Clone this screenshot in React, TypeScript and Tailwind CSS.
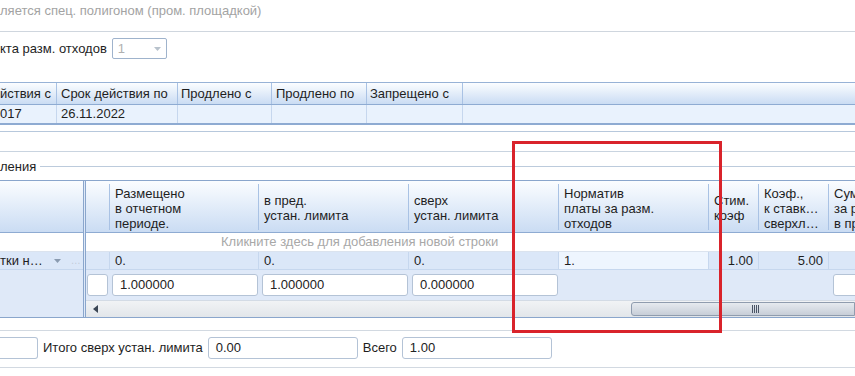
import { ReactNode } from "react";

type Col = { w: number; lines: string[] };

const gridCols: Col[] = [
  { w: 24, lines: [] },
  { w: 149, lines: ["Размещено", "в отчетном", "периоде."] },
  { w: 150, lines: ["в пред.", "устан. лимита"] },
  { w: 150, lines: ["сверх", "устан. лимита"] },
  { w: 150, lines: ["Норматив", "платы за разм.", "отходов"] },
  { w: 50, lines: ["Стим.", "коэф"] },
  { w: 70, lines: ["Коэф.,", "к ставк…", "сверхл…"] },
  { w: 60, lines: ["Сум…", "за р…", "в пр…"] },
];

function Input({ value, className }: { value: string; className: string }) {
  return (
    <div className={`h-[22px] border border-[#b4c3d6] rounded-[3px] bg-white flex items-center pl-[7px] text-[#222] ${className}`}>
      {value}
    </div>
  );
}

function HeadCell({ w, children, last }: { w: number; children: ReactNode; last?: boolean }) {
  return (
    <div className="h-full flex items-center shrink-0" style={{ width: w }}>
      <div className="flex-1 h-full flex items-center pl-[5px] pt-[3px] leading-[15px] text-[#1e1e1e] overflow-hidden whitespace-nowrap">
        {children}
      </div>
      {!last && <div className="w-px h-[46px] bg-[#a9c2e4]" />}
    </div>
  );
}

export default function App() {
  return (
    <div className="w-[855px] h-[376px] overflow-hidden bg-white relative font-['Liberation_Sans',Arial,sans-serif] text-[13px] text-[#1e1e1e]">
      {/* Top caption */}
      <div className="h-[31px] flex items-center pb-[9px] text-[#a3a3a3] whitespace-nowrap">
        ляется спец. полигоном (пром. площадкой)
      </div>
      <div className="h-px bg-[#cfd6de]" />

      {/* Combobox row */}
      <div className="h-[50px] pt-[6px] flex items-start">
        <span className="h-[20px] flex items-center mt-[1px]">кта разм. отходов</span>
        <div className="ml-[5px] w-[55px] h-[21px] border border-[#9fb3cc] rounded-[2px] flex items-center justify-between pl-[5px] pr-[5px] text-[#b0b0b0]">
          <span>1</span>
          <svg width="7" height="4" viewBox="0 0 7 4">
            <path d="M0 0h7L3.5 4z" fill="#b8c2cc" />
          </svg>
        </div>
      </div>

      {/* Period table */}
      <div className="border-t border-[#97b2d6]">
        <div className="h-[22px] flex bg-linear-to-b from-[#fbfdff] to-[#cadcf3] border-b border-[#8eabd2]">
          <div className="w-[57px] flex items-center justify-end pr-[5px] border-r border-[#a9c2e4] whitespace-nowrap">йствия с</div>
          <div className="w-[121px] flex items-center pl-[4px] border-r border-[#a9c2e4]">Срок действия по</div>
          <div className="w-[94px] flex items-center pl-[3px] border-r border-[#a9c2e4]">Продлено с</div>
          <div className="w-[95px] flex items-center pl-[4px] border-r border-[#a9c2e4]">Продлено по</div>
          <div className="w-[96px] flex items-center pl-[3px] border-r border-[#a9c2e4]">Запрещено с</div>
          <div className="flex-1" />
        </div>
        <div className="h-[20px] flex bg-[#e9f2fd] border-b-2 border-[#8eabd2]">
          <div className="w-[57px] flex items-center border-r border-[#c6d7ee]">017</div>
          <div className="w-[121px] flex items-center pl-[4px] border-r border-[#c6d7ee]">26.11.2022</div>
          <div className="w-[94px] border-r border-[#c6d7ee]" />
          <div className="w-[95px] border-r border-[#c6d7ee]" />
          <div className="w-[96px] border-r border-[#c6d7ee]" />
          <div className="flex-1" />
        </div>
      </div>

      <div className="h-[6px]" />
      <div className="h-px bg-[#b7c8dc]" />
      <div className="h-[19px]" />
      <div className="h-px bg-[#c9d4e0]" />

      {/* Fieldset legend */}
      <div className="h-[28px] flex items-center pt-[1px]">
        <span>ления</span>
        <div className="ml-[4px] flex-1 h-px bg-[#bccbdc]" />
      </div>

      {/* Grid */}
      <div className="flex h-[138px] border-t border-b border-[#8aa6cc]">
        <div className="w-[83px] shrink-0 flex flex-col">
          <div className="h-[52px] bg-linear-to-b from-[#fbfdff] to-[#cadcf3] border-b border-[#8eabd2]" />
          <div className="h-[19px] bg-white border-b border-[#dbe3ee]" />
          <div className="h-[18px] bg-[#dbe7f8] flex items-center whitespace-nowrap border-b border-[#c6d7ee]">
            <span>тки н…</span>
            <svg className="ml-[11px]" width="7" height="4" viewBox="0 0 7 4">
              <path d="M0 0h7L3.5 4z" fill="#8a9bb0" />
            </svg>
            <span className="ml-[10px] text-[#c2ccd8] text-[10px]">…</span>
          </div>
          <div className="flex-1 bg-[#dfe9f8]" />
        </div>
        <div className="w-[3px] shrink-0 border-l border-r border-[#8aa6cc] bg-[#dfe9f8]" />
        <div className="flex-1 flex flex-col overflow-hidden">
          <div className="h-[52px] shrink-0 flex bg-linear-to-b from-[#fbfdff] to-[#cadcf3] border-b border-[#8eabd2]">
            {gridCols.map((c, i) => (
              <HeadCell key={i} w={c.w} last={i === gridCols.length - 1}>
                <div className="flex flex-col">
                  {c.lines.map((l) => (
                    <span key={l}>{l}</span>
                  ))}
                </div>
              </HeadCell>
            ))}
          </div>
          <div className="h-[19px] shrink-0 flex items-center pl-[135px] text-[#a8a8a8] bg-white border-b border-[#dbe3ee] whitespace-nowrap">
            Кликните здесь для добавления новой строки
          </div>
          <div className="h-[18px] shrink-0 flex bg-[#dbe7f8] border-b border-[#c6d7ee]">
            <div className="w-[24px] shrink-0 border-r border-[#c6d7ee]" />
            <div className="w-[149px] shrink-0 pl-[5px] flex items-center border-r border-[#c6d7ee]">0.</div>
            <div className="w-[150px] shrink-0 pl-[5px] flex items-center border-r border-[#c6d7ee]">0.</div>
            <div className="w-[150px] shrink-0 pl-[5px] flex items-center border-r border-[#c6d7ee]">0.</div>
            <div className="w-[150px] shrink-0 pl-[5px] flex items-center bg-[#eef5fe] border-r border-[#c6d7ee]">1.</div>
            <div className="w-[50px] shrink-0 pr-[5px] flex items-center justify-end border-r border-[#c6d7ee]">1.00</div>
            <div className="w-[70px] shrink-0 pr-[5px] flex items-center justify-end border-r border-[#c6d7ee]">5.00</div>
            <div className="flex-1" />
          </div>
          <div className="h-[30px] shrink-0 flex items-center bg-[#dfe9f8]">
            <Input value="" className="w-[21px] ml-[1px] shrink-0" />
            <Input value="1.000000" className="w-[146px] ml-[4px] shrink-0" />
            <Input value="1.000000" className="w-[146px] ml-[4px] shrink-0" />
            <Input value="0.000000" className="w-[146px] ml-[4px] shrink-0" />
            <div className="w-[275px] shrink-0" />
            <Input value="" className="w-[40px] shrink-0" />
          </div>
          <div className="flex-1 flex items-center bg-linear-to-b from-[#f1f3f5] to-[#e2e6ea] border-t border-[#d3dbe5]">
            <svg className="ml-[7px]" width="5" height="8" viewBox="0 0 5 8">
              <path d="M5 0v8L0 4z" fill="#3b4654" />
            </svg>
            <div className="ml-[533px] flex-1 h-[14px] rounded-l-[3px] border border-[#8f9cae] bg-linear-to-b from-[#e6eaef] to-[#c7ced8] flex items-center pl-[120px] gap-[1px]">
              <div className="w-px h-[8px] bg-[#4a5566]" />
              <div className="w-px h-[8px] bg-[#4a5566]" />
              <div className="w-px h-[8px] bg-[#4a5566]" />
              <div className="w-px h-[8px] bg-[#4a5566]" />
            </div>
          </div>
        </div>
      </div>

      {/* Totals */}
      <div className="h-[12px]" />
      <div className="h-px bg-[#d2d9e1]" />
      <div className="h-[36px] flex items-center pb-[3px] whitespace-nowrap">
        <div className="w-[38px] h-[22px] border border-l-0 border-[#b4c3d6] rounded-r-[3px]" />
        <span className="ml-[5px]">Итого сверх устан. лимита</span>
        <Input value="0.00" className="w-[150px] ml-[5px]" />
        <span className="ml-[5px]">Всего</span>
        <Input value="1.00" className="w-[150px] ml-[5px]" />
      </div>
      <div className="h-px bg-[#d2d9e1]" />

      {/* Annotation */}
      <div className="absolute left-[512px] top-[141px] w-[210px] h-[192px] border-[3px] border-[#d9232b]" />
    </div>
  );
}
